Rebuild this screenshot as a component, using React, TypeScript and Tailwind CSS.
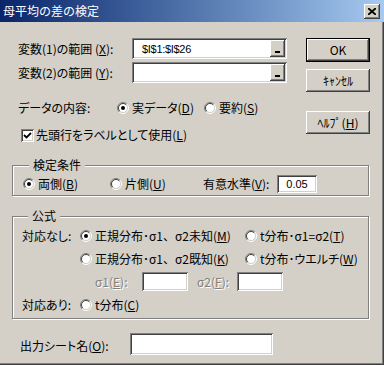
import React from 'react';

const raised = "bg-[#d4d0c8] shadow-[inset_-1px_-1px_0_#404040,inset_1px_1px_0_#fff,inset_-2px_-2px_0_#808080]";
const sunken = "bg-white shadow-[inset_1px_1px_0_#808080,inset_-1px_-1px_0_#fff,inset_2px_2px_0_#404040,inset_-2px_-2px_0_#d4d0c8]";
const etched = "border border-[#808080] shadow-[inset_1px_1px_0_#fff,1px_1px_0_#fff]";

const Radio = ({ checked }: { checked?: boolean }) => (
    <svg width="12" height="12" viewBox="0 0 12 12" className="shrink-0">
        <circle cx="6" cy="6" r="4.5" fill="#fff" />
        <path d="M2.1 9.9 A5.5 5.5 0 0 1 9.9 2.1" fill="none" stroke="#808080" />
        <path d="M9.9 2.1 A5.5 5.5 0 0 1 2.1 9.9" fill="none" stroke="#fff" />
        <path d="M2.8 9.2 A4.5 4.5 0 0 1 9.2 2.8" fill="none" stroke="#404040" />
        <path d="M9.2 2.8 A4.5 4.5 0 0 1 2.8 9.2" fill="none" stroke="#d4d0c8" />
        {checked && <circle cx="6" cy="6" r="2" fill="#000" />}
    </svg>
);

const RadioLabel = ({ checked, children, className = '' }: { checked?: boolean; children: React.ReactNode; className?: string }) => (
    <div className={`flex items-center gap-[3px] shrink-0 ${className}`}>
        <Radio checked={checked} />
        <span className="whitespace-nowrap">{children}</span>
    </div>
);

const RefInput = ({ value }: { value?: string }) => (
    <div className={`w-[155px] h-[21px] flex items-center pl-[10px] pr-[2px] ${sunken}`}>
        <span className="flex-1 font-['Liberation_Sans',sans-serif] text-[11px] tracking-[-0.3px]">{value}</span>
        <div className={`w-[15px] h-[17px] flex items-end justify-center pb-[4px] ${raised}`}>
            <div className="w-[5px] h-[2px] bg-black" />
        </div>
    </div>
);

const Button = ({ children, isDefault, className = '' }: { children: React.ReactNode; isDefault?: boolean; className?: string }) => (
    <div className={`w-[64px] flex items-center justify-center ${isDefault ? 'border border-black h-[24px]' : 'h-[23px]'} ${className}`}>
        <div className={`w-full h-full flex items-center justify-center ${raised}`}>{children}</div>
    </div>
);

// 読点は全角幅のまま
const Comma = () => <span className="[font-feature-settings:normal]">、</span>;

const App: React.FC = () => {
    return (
        <div className="w-[384px] h-[365px] bg-[#d4d0c8] flex flex-col font-['Noto_Sans_CJK_JP',sans-serif] [font-feature-settings:'palt'] text-[12px] leading-[16px] text-black shadow-[inset_-1px_-1px_0_#404040,inset_-2px_-2px_0_#808080] overflow-hidden">
            {/* タイトルバー */}
            <div className="h-[22px] flex items-center pl-[3px] pr-[4px] bg-linear-to-r from-[#0a246a] to-[#a6caf0] shrink-0">
                <span className="text-white text-[12px] [font-feature-settings:normal]">母平均の差の検定</span>
                <div className={`ml-auto w-[16px] h-[15px] flex items-center justify-center ${raised}`}>
                    <svg width="8" height="7" viewBox="0 0 8 7">
                        <path d="M0 0 L8 7 M8 0 L0 7" stroke="#000" strokeWidth="1.8" />
                    </svg>
                </div>
            </div>

            {/* 上部 */}
            <div className="flex pt-[16px] shrink-0">
                <div className="w-[306px] pl-[18px]">
                    <div className="flex items-center h-[21px]">
                        <span className="w-[114px] whitespace-nowrap">変数(1)の範囲 (<u>X</u>):</span>
                        <RefInput value="$I$1:$I$26" />
                    </div>
                    <div className="flex items-center h-[21px] mt-[3px]">
                        <span className="w-[114px] whitespace-nowrap">変数(2)の範囲 (<u>Y</u>):</span>
                        <RefInput />
                    </div>
                    <div className="flex items-center h-[16px] mt-[17px]">
                        <span className="w-[99px] whitespace-nowrap">データの内容:</span>
                        <RadioLabel checked className="w-[87px]">実データ(<u>D</u>)</RadioLabel>
                        <RadioLabel>要約(<u>S</u>)</RadioLabel>
                    </div>
                    <div className="flex items-center h-[16px] mt-[11px] pl-[3px] gap-[2px]">
                        <div className={`w-[13px] h-[13px] flex items-center justify-center ${sunken}`}>
                            <svg width="9" height="9" viewBox="0 0 9 9">
                                <path d="M1 4 L3.5 6.5 L8 2" fill="none" stroke="#000" strokeWidth="1.8" />
                            </svg>
                        </div>
                        <span className="whitespace-nowrap">先頭行をラベルとして使用(<u>L</u>)</span>
                    </div>
                </div>
                <div className="flex flex-col">
                    <Button isDefault>OK</Button>
                    <Button className="mt-[7px]">ｷｬﾝｾﾙ</Button>
                    <Button className="mt-[19px]">ﾍﾙﾌﾟ(<u>H</u>)</Button>
                </div>
            </div>

            {/* 検定条件 */}
            <fieldset className={`ml-[12px] w-[357px] mt-[14px] pl-[10px] pb-[1px] ${etched}`}>
                <legend className="ml-[6px] px-[4px] bg-[#d4d0c8]">検定条件</legend>
                <div className="flex items-center h-[20px] mt-[1px]">
                    <RadioLabel checked className="w-[87px]">両側(<u>B</u>)</RadioLabel>
                    <RadioLabel className="w-[93px]">片側(<u>U</u>)</RadioLabel>
                    <span className="w-[74px] whitespace-nowrap">有意水準(<u>V</u>):</span>
                    <div className={`w-[40px] h-[18px] flex items-center justify-center font-['Liberation_Sans',sans-serif] text-[11px] ${sunken}`}>0.05</div>
                </div>
            </fieldset>

            {/* 公式 */}
            <fieldset className={`ml-[12px] w-[357px] mt-[12px] pl-[9px] pb-[2px] ${etched}`}>
                <legend className="ml-[6px] px-[4px] bg-[#d4d0c8]">公式</legend>
                <div className="flex items-center h-[23px]">
                    <span className="w-[58px] whitespace-nowrap">対応なし:</span>
                    <RadioLabel checked className="w-[165px]">正規分布･σ1<Comma />σ2未知(<u>M</u>)</RadioLabel>
                    <RadioLabel>t分布･σ1=σ2(<u>T</u>)</RadioLabel>
                </div>
                <div className="flex items-center h-[23px]">
                    <span className="w-[58px]" />
                    <RadioLabel className="w-[165px]">正規分布･σ1<Comma />σ2既知(<u>K</u>)</RadioLabel>
                    <RadioLabel>t分布･ウエルチ(<u>W</u>)</RadioLabel>
                </div>
                <div className="flex items-center h-[23px] pl-[73px] text-[#808080] [text-shadow:1px_1px_0_#fff]">
                    <span className="w-[47px] whitespace-nowrap">σ1(<u>E</u>):</span>
                    <div className={`w-[46px] h-[19px] ${sunken}`} />
                    <span className="w-[40px] ml-[9px] whitespace-nowrap">σ2(<u>F</u>):</span>
                    <div className={`w-[46px] h-[19px] ${sunken}`} />
                </div>
                <div className="flex items-center h-[23px]">
                    <span className="w-[58px] whitespace-nowrap">対応あり:</span>
                    <RadioLabel>t分布(<u>C</u>)</RadioLabel>
                </div>
            </fieldset>

            {/* 出力先 */}
            <div className="flex items-end h-[22px] mt-[14px] pl-[20px]">
                <span className="w-[110px] whitespace-nowrap pb-[1px]">出力シート名(<u>O</u>):</span>
                <div className={`w-[143px] h-[22px] ${sunken}`} />
            </div>
        </div>
    );
};

export default App;
